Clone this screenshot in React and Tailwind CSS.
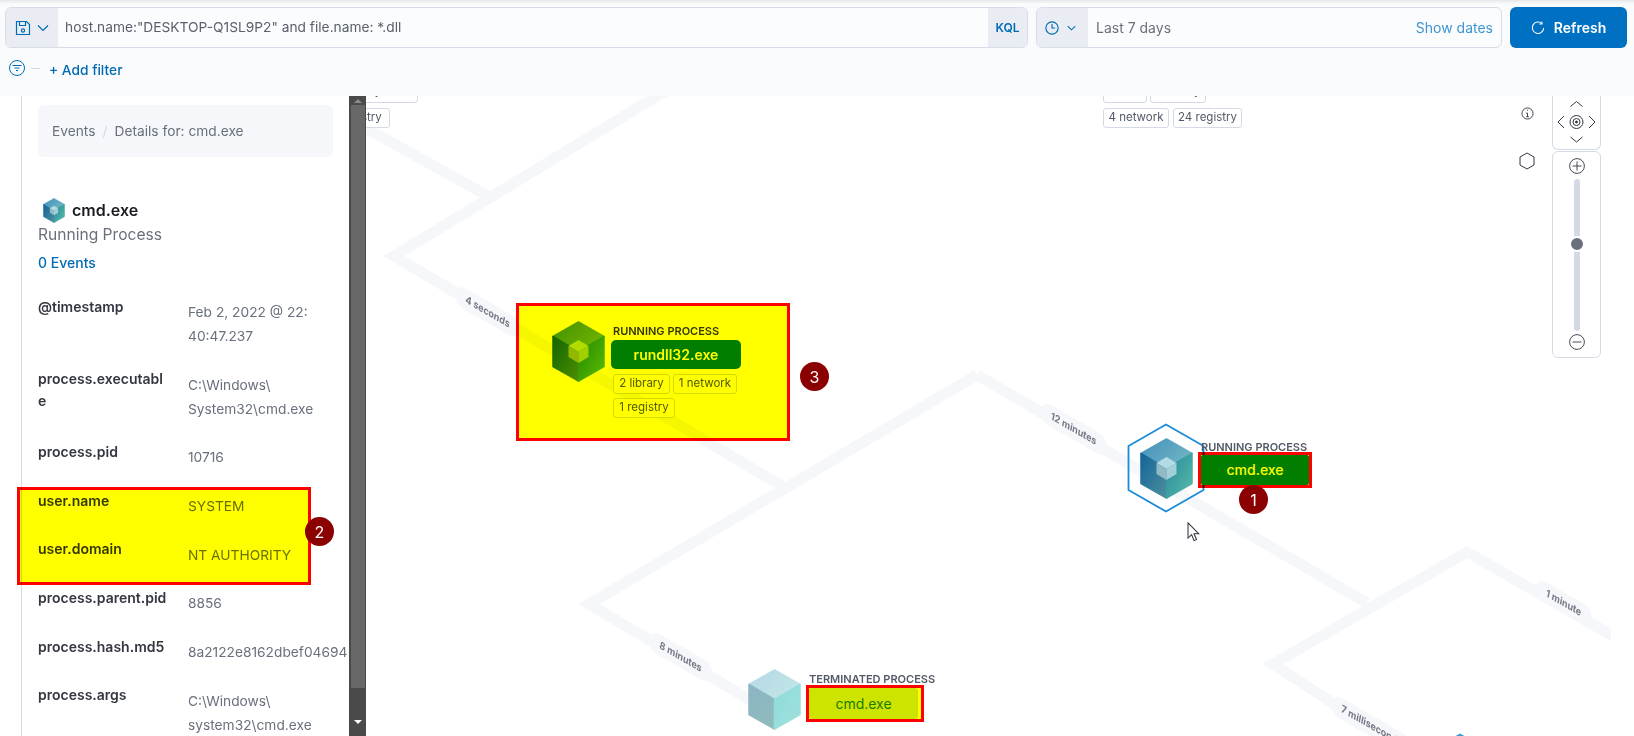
import { useId } from 'react'

const FONT = { fontFamily: 'Inter, "Noto Sans", sans-serif' }

const rows = [
  { label: '@timestamp', value: ['Feb 2, 2022 @ 22:', '40:47.237'] },
  { label: 'process.executable', value: ['C:\\Windows\\', 'System32\\cmd.exe'] },
  { label: 'process.pid', value: ['10716'] },
  { label: 'user.name', value: ['SYSTEM'] },
  { label: 'user.domain', value: ['NT AUTHORITY'] },
  { label: 'process.parent.pid', value: ['8856'] },
  { label: 'process.hash.md5', value: ['8a2122e8162dbef04694'] },
  { label: 'process.args', value: ['C:\\Windows\\', 'system32\\cmd.exe'] },
]

// page coordinates, the svg viewBox is offset to match
const edges = [
  '667,90 394,256 782,486',
  '360,125 488,196',
  '977,375 589,604 760,706',
  '977,375 1367,603',
  '1397,745 1273,664 1467,552 1620,640',
]

const edgeLabels = [
  { text: '4 seconds', x: 487, y: 315, len: 46 },
  { text: '12 minutes', x: 1073, y: 432, len: 48 },
  { text: '8 minutes', x: 680, y: 660, len: 44 },
  { text: '1 minute', x: 1563, y: 606, len: 36 },
  { text: '7 milliseconds', x: 1371, y: 729, len: 64 },
]

function Cube({ className, inner = true, faded = false }) {
  const id = useId()
  return (
    <svg viewBox="0 0 53 61" className={className}>
      <defs>
        <linearGradient id={id + 't'} x1="0" y1="0" x2="1" y2="0.6">
          <stop offset="0" stopColor={faded ? '#b7d6e6' : '#4390bd'} />
          <stop offset="1" stopColor={faded ? '#bfe6e6' : '#6fb4c2'} />
        </linearGradient>
        <linearGradient id={id + 'l'} x1="0" y1="0" x2="1" y2="1">
          <stop offset="0" stopColor={faded ? '#8db4c4' : '#13649a'} />
          <stop offset="1" stopColor={faded ? '#8fbcbc' : '#4d8f9c'} />
        </linearGradient>
        <linearGradient id={id + 'r'} x1="0" y1="0" x2="1" y2="1">
          <stop offset="0" stopColor={faded ? '#8fdcdc' : '#23889e'} />
          <stop offset="1" stopColor={faded ? '#9fe0dc' : '#5cbca6'} />
        </linearGradient>
      </defs>
      <g strokeLinejoin="round" strokeWidth="1.5">
        <path d="M26.5 1 52 15.5 26.5 30.5 1 15.5Z" fill={`url(#${id}t)`} stroke={`url(#${id}t)`} />
        <path d="M1 15.5 26.5 30.5V60L1 45.5Z" fill={`url(#${id}l)`} stroke={`url(#${id}l)`} />
        <path d="M52 15.5 26.5 30.5V60L52 45.5Z" fill={`url(#${id}r)`} stroke={`url(#${id}r)`} />
      </g>
      {inner && (
        <g>
          <path d="M26.5 19 36.5 25 26.5 31 16.5 25Z" fill="#b4dbe4" />
          <path d="M16.5 25 26.5 31V42L16.5 36Z" fill="#92b9c6" />
          <path d="M36.5 25 26.5 31V42L36.5 36Z" fill="#a3d0d8" />
        </g>
      )}
    </svg>
  )
}

function Tag({ children, className = '' }) {
  return (
    <span className={`flex items-center justify-center border border-[#d3dae6] rounded-[3px] bg-white text-[11.5px] text-[#535966] whitespace-nowrap ${className}`}>
      {children}
    </span>
  )
}

function Badge({ n, className }) {
  return (
    <div className={`absolute w-[29px] h-[29px] rounded-full bg-[#8b0000] text-white text-base flex items-center justify-center ${className}`}>
      {n}
    </div>
  )
}

function Header() {
  return (
    <div className="h-[96px] bg-[#fafbfd] relative z-10">
      <div className="absolute inset-x-0 top-0 h-[4px] bg-gradient-to-b from-[#e6e7e9] to-[#fafbfd]" />
      <div className="flex items-start h-[48px] pt-[7px] pl-[5px] pr-[7px]">
        <div className="w-[1023px] h-[41px] flex border border-[#d6dde8] rounded-md overflow-hidden bg-[#fbfcfd]">
          <div className="w-[52px] bg-[#e9edf3] flex items-center pl-[9px] gap-[6px] text-[#006bb4]">
            <svg viewBox="0 0 16 16" className="w-[16px] h-[16px]" fill="none" stroke="currentColor" strokeWidth="1.2">
              <path d="M1.5 1.5h10l3 3v10h-13z" />
              <path d="M4.5 1.5v4h6v-4" />
              <circle cx="8" cy="10.5" r="1.6" />
            </svg>
            <svg viewBox="0 0 12 8" className="w-[12px] h-[8px]" fill="none" stroke="currentColor" strokeWidth="1.2">
              <path d="M1 1.5l5 5 5-5" />
            </svg>
          </div>
          <div className="flex-1 flex items-center pl-[7px] text-[13.75px] text-[#5a606c]">
            host.name:"DESKTOP-Q1SL9P2" and file.name: *.dll
          </div>
          <div className="w-[39px] bg-[#e9edf3] flex items-center justify-center text-xs font-semibold text-[#006bb4]">KQL</div>
        </div>
        <div className="ml-[8px] w-[466px] h-[41px] flex border border-[#d6dde8] rounded-md overflow-hidden bg-[#fbfcfd]">
          <div className="w-[51px] bg-[#e9edf3] flex items-center pl-[8px] gap-[8px] text-[#006bb4]">
            <svg viewBox="0 0 16 16" className="w-[14px] h-[14px]" fill="none" stroke="currentColor" strokeWidth="1.3">
              <circle cx="8" cy="8" r="7" />
              <path d="M8 3.5V8h3.5" />
            </svg>
            <svg viewBox="0 0 12 8" className="w-[9px] h-[6px]" fill="none" stroke="currentColor" strokeWidth="1.4">
              <path d="M1 1.5l5 5 5-5" />
            </svg>
          </div>
          <div className="flex-1 flex items-center justify-between pl-[8px] pr-[8px] text-sm">
            <span className="text-[#69707d]">Last 7 days</span>
            <span className="text-[#3f96d1]">Show dates</span>
          </div>
        </div>
        <div className="ml-[8px] w-[117px] h-[41px] rounded-md bg-[#0071c2] text-white text-sm font-semibold flex items-center justify-center gap-[9px]">
          <svg viewBox="0 0 16 16" className="w-[14px] h-[14px]" fill="none" stroke="currentColor" strokeWidth="1.2">
            <path d="M12.5 3A6.5 6.5 0 1 0 14.5 8" />
            <path d="M12.5 0.5V3.5H9.5" />
          </svg>
          Refresh
        </div>
      </div>
      <div className="flex items-center pl-[9px] pt-[12px] text-[13.75px] font-medium text-[#006bb4]">
        <svg viewBox="0 0 16 16" className="w-[16px] h-[16px] -mt-1" fill="none" stroke="currentColor" strokeWidth="1">
          <circle cx="8" cy="8" r="7.5" />
          <path d="M3.5 5.5h9M5.5 8h5M7 10.5h2" />
        </svg>
        <span className="ml-[6px] mr-[9px] w-[9px] h-px bg-[#d3dae6] -mt-1" />
        + Add filter
      </div>
    </div>
  )
}

function DetailPanel() {
  return (
    <div className="w-[328px] h-full ml-[21px] border-l border-[#d3dae6] pl-[16px] overflow-hidden">
      <div className="w-[295px] h-[52px] mt-[9px] rounded-md bg-[#f5f7fa] flex items-center pl-[14px] text-[13.75px] text-[#69707d]">
        Events
        <span className="mx-[7px] text-[#d3dae6]">/</span>
        Details for: cmd.exe
      </div>
      <div className="mt-[41px] h-6 flex items-center pl-[5px] gap-[7px] text-base font-semibold text-[#1a1c21]">
        <Cube className="w-[22px] h-[25px]" />
        cmd.exe
      </div>
      <div className="h-6 mt-px text-[15.6px] leading-6 text-[#69707d]">Running Process</div>
      <div className="mt-[6px] text-sm leading-5 font-medium text-[#006bb4]">0 Events</div>
      <div className="mt-[27px] w-[400px] grid grid-cols-[130px_1fr] gap-x-5 gap-y-[24.7px]">
        {rows.map((r) => (
          <div key={r.label} className="contents">
            <div className="-mt-[4.5px] text-sm leading-[21.5px] font-semibold text-[#343741] break-all">{r.label}</div>
            <div className="text-[13.75px] leading-6 text-[#69707d] whitespace-nowrap">
              {r.value.map((line) => (
                <div key={line}>{line}</div>
              ))}
            </div>
          </div>
        ))}
      </div>
    </div>
  )
}

function Scrollbar() {
  return (
    <div className="w-[17px] h-full bg-[#4a4a4a] flex flex-col items-center">
      <div className="h-[9px] flex items-center justify-center">
        <div className="border-x-[4px] border-x-transparent border-b-[4px] border-b-[#8a8a8a]" />
      </div>
      <div className="w-[14px] h-[583px] bg-[#686868]" />
      <div className="flex-1 flex items-end justify-center pb-[12px]">
        <div className="border-x-[4px] border-x-transparent border-t-[4px] border-t-white" />
      </div>
    </div>
  )
}

function Edges() {
  return (
    <svg viewBox="366 96 1245 640" className="absolute inset-0 w-[1245px] h-[640px]" fill="none" style={FONT}>
      {edges.map((pts) => (
        <polyline key={pts} points={pts} stroke="#f5f7fa" strokeWidth="11" strokeLinejoin="miter" />
      ))}
      {edgeLabels.map((l) => (
        <g key={l.text} transform={`translate(${l.x} ${l.y}) matrix(0.866 0.5 -0.2 0.98 0 0)`}>
          <line x1={-l.len / 2 - 4} x2={l.len / 2 + 4} y1="-3" y2="-3" stroke="#f5f7fa" strokeWidth="20" strokeLinecap="round" />
          <text textAnchor="middle" fontSize="10" fontWeight="700" fill="#757b87" stroke="none">{l.text}</text>
        </g>
      ))}
      <path d="M1460 733.5l7 4h-14z" fill="#3f96d1" />
    </svg>
  )
}

function Controls() {
  return (
    <>
      <svg viewBox="0 0 14 14" className="absolute left-[1155px] top-[11px] w-[13px] h-[13px]" fill="none" stroke="#343741">
        <circle cx="7" cy="7" r="6" />
        <path d="M5.5 6.5H7V10.5M5.5 10.5h3" />
        <path d="M6.5 3.5h1" />
      </svg>
      <svg viewBox="0 0 16 18" className="absolute left-[1153px] top-[56px] w-[16px] h-[18px]" fill="none" stroke="#343741" strokeLinejoin="round">
        <path d="M8 1l7 4v8l-7 4-7-4V5z" />
      </svg>
      <div className="absolute left-[1186px] top-0 w-[49px] h-[54px] bg-white border-x border-b border-[#d3dae6] rounded-b-md">
        <svg viewBox="0 0 47 53" className="block w-[47px] h-[53px]" fill="none" stroke="#343741" strokeWidth="1">
          <path d="M17.5 10.5l6-5 6 5M11 20l-6 6 6 6M36 20l6 6-6 6M17.5 41l6 5 6-5" />
          <circle cx="23.5" cy="26" r="6.5" />
          <circle cx="23.5" cy="26" r="3.5" />
          <circle cx="23.5" cy="26" r="1" fill="#343741" />
        </svg>
      </div>
      <div className="absolute left-[1186px] top-[55px] w-[49px] h-[207px] bg-white border border-[#d3dae6] rounded-md flex flex-col items-center">
        <svg viewBox="0 0 16 16" className="w-[16px] h-[16px] mt-[6px]" fill="none" stroke="#343741" strokeWidth="0.9">
          <circle cx="8" cy="8" r="7.4" />
          <path d="M3.5 8h9M8 3.5v9" />
        </svg>
        <div className="relative w-[6px] h-[152px] mt-[5px] rounded-full bg-[#d3dae6]">
          <div className="absolute -left-[5px] top-[57px] w-[16px] h-[16px] rounded-full bg-[#69707d] border-[2px] border-white" />
        </div>
        <svg viewBox="0 0 16 16" className="w-[16px] h-[16px] mt-[3px]" fill="none" stroke="#343741" strokeWidth="0.9">
          <circle cx="8" cy="8" r="7.4" />
          <path d="M3.5 8h9" />
        </svg>
      </div>
    </>
  )
}

function Canvas() {
  return (
    <div className="relative w-[1245px] h-full overflow-hidden bg-white">
      <Edges />

      {/* leftovers of nodes scrolled under the header and the panel */}
      <Tag className="absolute -left-[64px] -top-[15px] w-[116px] h-[22px]">1 library</Tag>
      <Tag className="absolute -left-[42px] top-[12px] w-[66px] h-5">1 registry</Tag>
      <Tag className="absolute left-[737px] -top-[15px] w-[44px] h-[22px]">2 file</Tag>
      <Tag className="absolute left-[784px] -top-[15px] w-[56px] h-[22px]">3 library</Tag>
      <Tag className="absolute left-[737px] top-[12px] w-[66px] h-5">4 network</Tag>
      <Tag className="absolute left-[807px] top-[12px] w-[69px] h-5">24 registry</Tag>

      {/* rundll32 node */}
      <div className="absolute left-[186px] top-[225px] flex gap-[6px]">
        <Cube className="w-[53px] h-[61px] shrink-0" />
        <div className="pt-[4px] w-[130px]">
          <div className="pl-[2px] text-[11px] leading-[13px] font-semibold text-[#343741] whitespace-nowrap">RUNNING PROCESS</div>
          <div className="mt-[2px] h-[29px] rounded-[5px] bg-[#017d73] flex items-center justify-center text-sm font-semibold text-white">rundll32.exe</div>
          <div className="mt-[5px] pl-[2px] flex flex-wrap gap-x-[3px] gap-y-[4px]">
            <Tag className="w-[57px] h-5">2 library</Tag>
            <Tag className="w-[64px] h-5">1 network</Tag>
            <Tag className="w-[62px] h-5">1 registry</Tag>
          </div>
        </div>
      </div>
      <div className="absolute left-[150px] top-[207px] w-[274px] h-[138px] border-[3px] border-[#ff0000] bg-[#ffff00] mix-blend-multiply" />
      <Badge n="3" className="left-[434px] top-[266px]" />

      {/* cmd.exe, selected */}
      <svg viewBox="0 0 78 90" className="absolute left-[761px] top-[327px] w-[78px] h-[90px]" fill="none" stroke="#1d8cd8" strokeWidth="1.8" strokeLinejoin="round">
        <path d="M39 1.5 76.5 23v44L39 88.5 1.5 67V23z" />
      </svg>
      <Cube className="absolute left-[774px] top-[342px] w-[53px] h-[61px]" />
      <div className="absolute left-[835px] top-[345px] text-[11px] leading-[13px] font-semibold text-[#535966] whitespace-nowrap">RUNNING PROCESS</div>
      <div className="absolute left-[835px] top-[359px] w-[108px] h-[30px] rounded-[2px] bg-[#017d73] flex items-center justify-center text-sm font-medium text-white">cmd.exe</div>
      <div className="absolute left-[832px] top-[356px] w-[114px] h-[36px] border-[3px] border-[#ff0000] bg-[#ffff00] mix-blend-multiply" />
      <Badge n="1" className="left-[873px] top-[389px]" />

      <svg viewBox="0 0 12 19" className="absolute left-[821px] top-[426px] w-[13px] h-[20px]" fill="#fff" stroke="#343741" strokeWidth="1">
        <path d="M.8.8v14.5l3.4-3.2 2.4 5.6 2.3-1-2.4-5.5h4.6z" />
      </svg>

      {/* terminated cmd.exe */}
      <Cube className="absolute left-[382px] top-[573px] w-[53px] h-[61px]" inner={false} faded />
      <div className="absolute left-[443px] top-[577px] text-[11px] leading-[13px] font-semibold text-[#535966] whitespace-nowrap">TERMINATED PROCESS</div>
      <div className="absolute left-[443px] top-[592px] w-[109px] h-[31px] rounded-[3px] bg-[#cde3e6] flex items-center justify-center text-sm text-[#1a7d50]">cmd.exe</div>
      <div className="absolute left-[440px] top-[589px] w-[118px] h-[37px] border-[3px] border-[#ff0000] bg-[#ffff00] mix-blend-multiply" />

      <Controls />
    </div>
  )
}

export default function App() {
  return (
    <div className="relative w-full h-[736px] overflow-hidden bg-white" style={FONT}>
      <Header />
      <div className="flex h-[640px]">
        <DetailPanel />
        <Scrollbar />
        <Canvas />
      </div>
      {/* highlight from the annotated screenshot */}
      <div className="absolute left-[17px] top-[487px] w-[294px] h-[98px] border-[3px] border-[#ff0000] bg-[#ffff00] mix-blend-multiply" />
      <Badge n="2" className="left-[305px] top-[517px]" />
    </div>
  )
}
